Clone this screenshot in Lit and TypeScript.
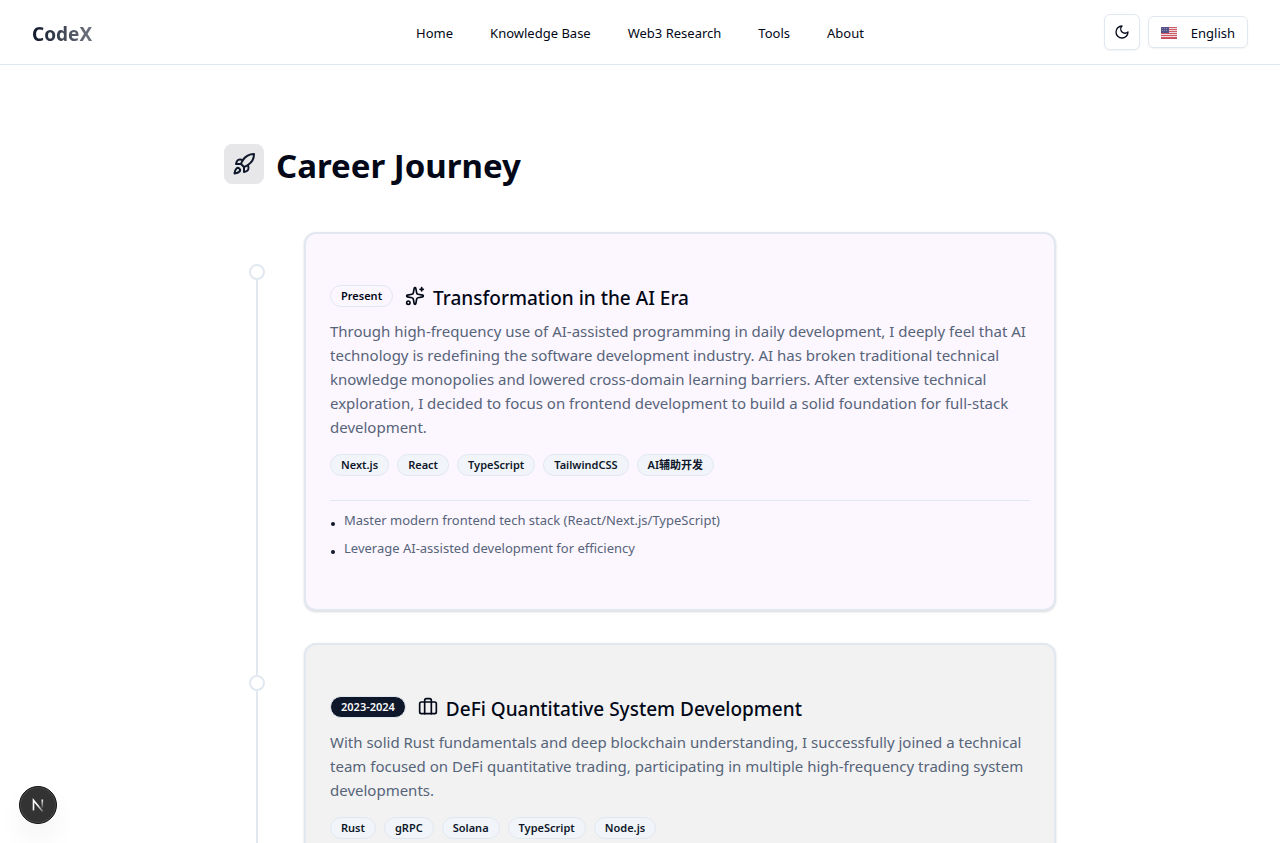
import { LitElement, html, css, svg } from "lit";
import { customElement, property } from "lit/decorators.js";

interface Stage {
  date: string;
  filled: boolean;
  icon: "sparkles" | "briefcase";
  tone: "violet" | "grey";
  title: string;
  text: string;
  tags: string[];
  notes: string[];
}

const stages: Stage[] = [
  {
    date: "Present",
    filled: false,
    icon: "sparkles",
    tone: "violet",
    title: "Transformation in the AI Era",
    text: "Through high-frequency use of AI-assisted programming in daily development, I deeply feel that AI technology is redefining the software development industry. AI has broken traditional technical knowledge monopolies and lowered cross-domain learning barriers. After extensive technical exploration, I decided to focus on frontend development to build a solid foundation for full-stack development.",
    tags: ["Next.js", "React", "TypeScript", "TailwindCSS", "AI辅助开发"],
    notes: [
      "Master modern frontend tech stack (React/Next.js/TypeScript)",
      "Leverage AI-assisted development for efficiency",
    ],
  },
  {
    date: "2023-2024",
    filled: true,
    icon: "briefcase",
    tone: "grey",
    title: "DeFi Quantitative System Development",
    text: "With solid Rust fundamentals and deep blockchain understanding, I successfully joined a technical team focused on DeFi quantitative trading, participating in multiple high-frequency trading system developments.",
    tags: ["Rust", "gRPC", "Solana", "TypeScript", "Node.js"],
    notes: [],
  },
];

const icons = {
  moon: svg`<path d="M12 3a6 6 0 0 0 9 9 9 9 0 1 1-9-9Z"/>`,
  rocket: svg`<path d="M4.5 16.5c-1.5 1.26-2 5-2 5s3.74-.5 5-2c.71-.84.7-2.13-.09-2.91a2.18 2.18 0 0 0-2.91-.09z"/><path d="m12 15-3-3a22 22 0 0 1 2-3.95A12.88 12.88 0 0 1 22 2c0 2.72-.78 7.5-6 11a22.35 22.35 0 0 1-4 2z"/><path d="M9 12H4s.55-3.03 2-4c1.62-1.08 5 0 5 0"/><path d="M12 15v5s3.03-.55 4-2c1.08-1.62 0-5 0-5"/>`,
  sparkles: svg`<path d="M11.017 2.814a1 1 0 0 1 1.966 0l1.051 5.558a2 2 0 0 0 1.594 1.594l5.558 1.051a1 1 0 0 1 0 1.966l-5.558 1.051a2 2 0 0 0-1.594 1.594l-1.051 5.558a1 1 0 0 1-1.966 0l-1.051-5.558a2 2 0 0 0-1.594-1.594l-5.558-1.051a1 1 0 0 1 0-1.966l5.558-1.051a2 2 0 0 0 1.594-1.594z"/><path d="M20 2v4"/><path d="M22 4h-4"/><circle cx="4" cy="20" r="2"/>`,
  briefcase: svg`<path d="M16 20V4a2 2 0 0 0-2-2h-4a2 2 0 0 0-2 2v16"/><rect width="20" height="14" x="2" y="6" rx="2"/>`,
};

const icon = (name: keyof typeof icons, size: number) => html`<svg
  class="icon"
  width=${size}
  height=${size}
  viewBox="0 0 24 24"
  fill="none"
  stroke="currentColor"
  stroke-width="2"
  stroke-linecap="round"
  stroke-linejoin="round"
  aria-hidden="true"
>${icons[name]}</svg>`;

@customElement("site-header")
class SiteHeader extends LitElement {
  static styles = css`
    :host {
      display: grid;
      grid-template-columns: 1fr auto 1fr;
      align-items: center;
      box-sizing: border-box;
      height: 65px;
      padding: 0 32px;
      border-bottom: 1px solid #e2e8f0;
      background: #fff;
    }
    a { color: inherit; text-decoration: none; }
    .logo {
      justify-self: start;
      padding-top: 4px;
      font-size: 19px;
      line-height: 28px;
      font-weight: 700;
      color: transparent;
      background: linear-gradient(90deg, #0f172a, #6f747f);
      background-clip: text;
      -webkit-background-clip: text;
    }
    .nav { display: flex; gap: 5px; font-size: 13px; line-height: 20px; }
    .nav a { padding: 9px 16px 7px; border-radius: 6px; }
    .tools { display: flex; align-items: center; justify-content: flex-end; gap: 8px; }
    button {
      display: flex;
      align-items: center;
      justify-content: center;
      box-sizing: border-box;
      border: 1px solid #e2e8f0;
      border-radius: 6px;
      background: #fff;
      color: inherit;
      font: inherit;
      box-shadow: 0 1px 2px rgb(0 0 0 / 0.05);
    }
    .theme { width: 36px; height: 36px; padding: 0; }
    .lang {
      min-width: 100px;
      height: 32px;
      padding: 2px 12px 0;
      font-size: 13px;
      justify-content: space-between;
    }
  `;

  render() {
    return html`
      <a class="logo" href="#">CodeX</a>
      <nav class="nav">
        ${["Home", "Knowledge Base", "Web3 Research", "Tools", "About"].map(
          (t) => html`<a href="#">${t}</a>`
        )}
      </nav>
      <div class="tools">
        <button class="theme" aria-label="Toggle theme">${icon("moon", 16)}</button>
        <button class="lang">
          <svg width="16" height="12" viewBox="0 0 16 12" aria-hidden="true">
            <rect width="16" height="12" fill="#eed9dc" />
            ${[0, 2, 4, 6, 8, 10].map((y) => svg`<rect y=${y} width="16" height="1" fill="#cf5b69"/>`)}
            <rect y="11" width="16" height="1" fill="#c8495a" />
            <rect width="8" height="6" fill="#53538a" />
            <path d="M1 1.500h6M1 3.500h6" stroke="#8585b0" stroke-dasharray="1 1" />
          </svg>
          <span>English</span>
        </button>
      </div>
    `;
  }
}

@customElement("career-stage")
class CareerStage extends LitElement {
  @property({ attribute: false }) stage!: Stage;

  static styles = css`
    :host { display: grid; grid-template-columns: 80px 1fr; }
    .rail { display: flex; flex-direction: column; align-items: center; width: 66px; }
    .before { width: 2px; height: 32px; }
    :host([linked]) .before { background: #e2e8f0; }
    .dot {
      box-sizing: border-box;
      width: 16px;
      height: 16px;
      border: 2px solid #e2e8f0;
      border-radius: 50%;
      background: #fff;
    }
    .after { flex: 1; width: 2px; background: #e2e8f0; }
    .card {
      margin-bottom: 32px;
      padding: 46px 24px 48px;
      border: 2px solid #e2e8f0;
      border-radius: 12px;
      box-shadow: 0 1px 3px rgb(0 0 0 / 0.1), 0 1px 2px rgb(0 0 0 / 0.06);
    }
    .violet { background: #fcf6ff; }
    .grey { background: #f2f2f2; }
    .head { display: flex; align-items: center; gap: 12px; }
    .title { display: flex; align-items: center; gap: 8px; }
    h3 { margin: 0; padding-top: 4px; font-size: 19px; line-height: 28px; font-weight: 500; }
    p { margin: 7px 0 0; font-size: 15px; line-height: 24px; color: #566479; }
    .tags { display: flex; flex-wrap: wrap; gap: 8px; margin-top: 15px; }
    .tag {
      padding: 2px 10px;
      border: 1px solid #e2e8f0;
      border-radius: 11px;
      font-size: 11px;
      line-height: 16px;
      height: 16px;
      font-weight: 600;
    }
    .tags .tag { background: #f1f5f9; color: #0f172a; }
    .filled { background: #0f172a; color: #f8fafc; }
    .notes {
      display: grid;
      gap: 8px;
      margin: 24px 0 0;
      padding: 9px 0 3px;
      border-top: 1px solid #e2e8f0;
      list-style: none;
      font-size: 13px;
      line-height: 20px;
      color: #566479;
    }
    .notes li { display: flex; align-items: center; gap: 8px; }
    .notes li::before {
      content: "";
      width: 4px;
      height: 4px;
      margin: 8px 1px 0;
      border-radius: 50%;
      background: #0f172a;
    }
  `;

  render() {
    const s = this.stage;
    return html`
      <div class="rail"><span class="before"></span><span class="dot"></span><span class="after"></span></div>
      <article class="card ${s.tone}">
        <div class="head">
          <span class="tag ${s.filled ? "filled" : ""}">${s.date}</span>
          <div class="title">${icon(s.icon, 20)}<h3>${s.title}</h3></div>
        </div>
        <p>${s.text}</p>
        <div class="tags">${s.tags.map((t) => html`<span class="tag">${t}</span>`)}</div>
        ${s.notes.length
          ? html`<ul class="notes">${s.notes.map((n) => html`<li>${n}</li>`)}</ul>`
          : null}
      </article>
    `;
  }
}

@customElement("app-root")
class AppRoot extends LitElement {
  static styles = css`
    :host {
      display: block;
      height: 100vh;
      overflow: hidden;
      background: #fff;
      color: #020817;
      font-family: "Noto Sans", "Noto Sans CJK SC", sans-serif;
    }
    main { max-width: 832px; margin: 0 auto; padding: 79px 32px; }
    .heading { display: flex; align-items: flex-start; gap: 12px; margin-bottom: 44px; }
    .badge {
      display: grid;
      place-items: center;
      width: 40px;
      height: 40px;
      border-radius: 8px;
      background: #e7e7e9;
      color: #0f172a;
    }
    h1 { margin: 0; font-size: 33px; line-height: 44px; font-weight: 700; }
    .dev {
      position: fixed;
      left: 19px;
      bottom: 19px;
      width: 38px;
      height: 38px;
      padding: 0;
      border: 1px solid #111;
      border-radius: 50%;
      background: #333;
      box-shadow: inset 0 0 0 1px #4a4a4a, 0 16px 32px -8px rgb(0 0 0 / 0.14);
    }
    .dev svg { display: block; margin: auto; }
  `;

  render() {
    return html`
      <site-header></site-header>
      <main>
        <div class="heading">
          <span class="badge">${icon("rocket", 24)}</span>
          <h1>Career Journey</h1>
        </div>
        ${stages.map((s, i) => html`<career-stage .stage=${s} ?linked=${i > 0}></career-stage>`)}
      </main>
      <button class="dev" aria-label="Developer tools">
        <svg width="14" height="14" viewBox="0 0 14 14" fill="none" aria-hidden="true">
          <defs>
            <linearGradient id="a" x1="7" y1="7" x2="12" y2="14" gradientUnits="userSpaceOnUse">
              <stop stop-color="#fff" /><stop offset="1" stop-color="#fff" stop-opacity="0.2" />
            </linearGradient>
            <linearGradient id="b" x1="11" y1="1" x2="11" y2="11" gradientUnits="userSpaceOnUse">
              <stop stop-color="#fff" /><stop offset="1" stop-color="#fff" stop-opacity="0" />
            </linearGradient>
          </defs>
          <path d="M2.500 12.500V2.300L11.700 13.500" stroke="url(#a)" stroke-width="1.600" />
          <path d="M11.300 1.500V10" stroke="url(#b)" stroke-width="1.600" />
        </svg>
      </button>
    `;
  }
}
